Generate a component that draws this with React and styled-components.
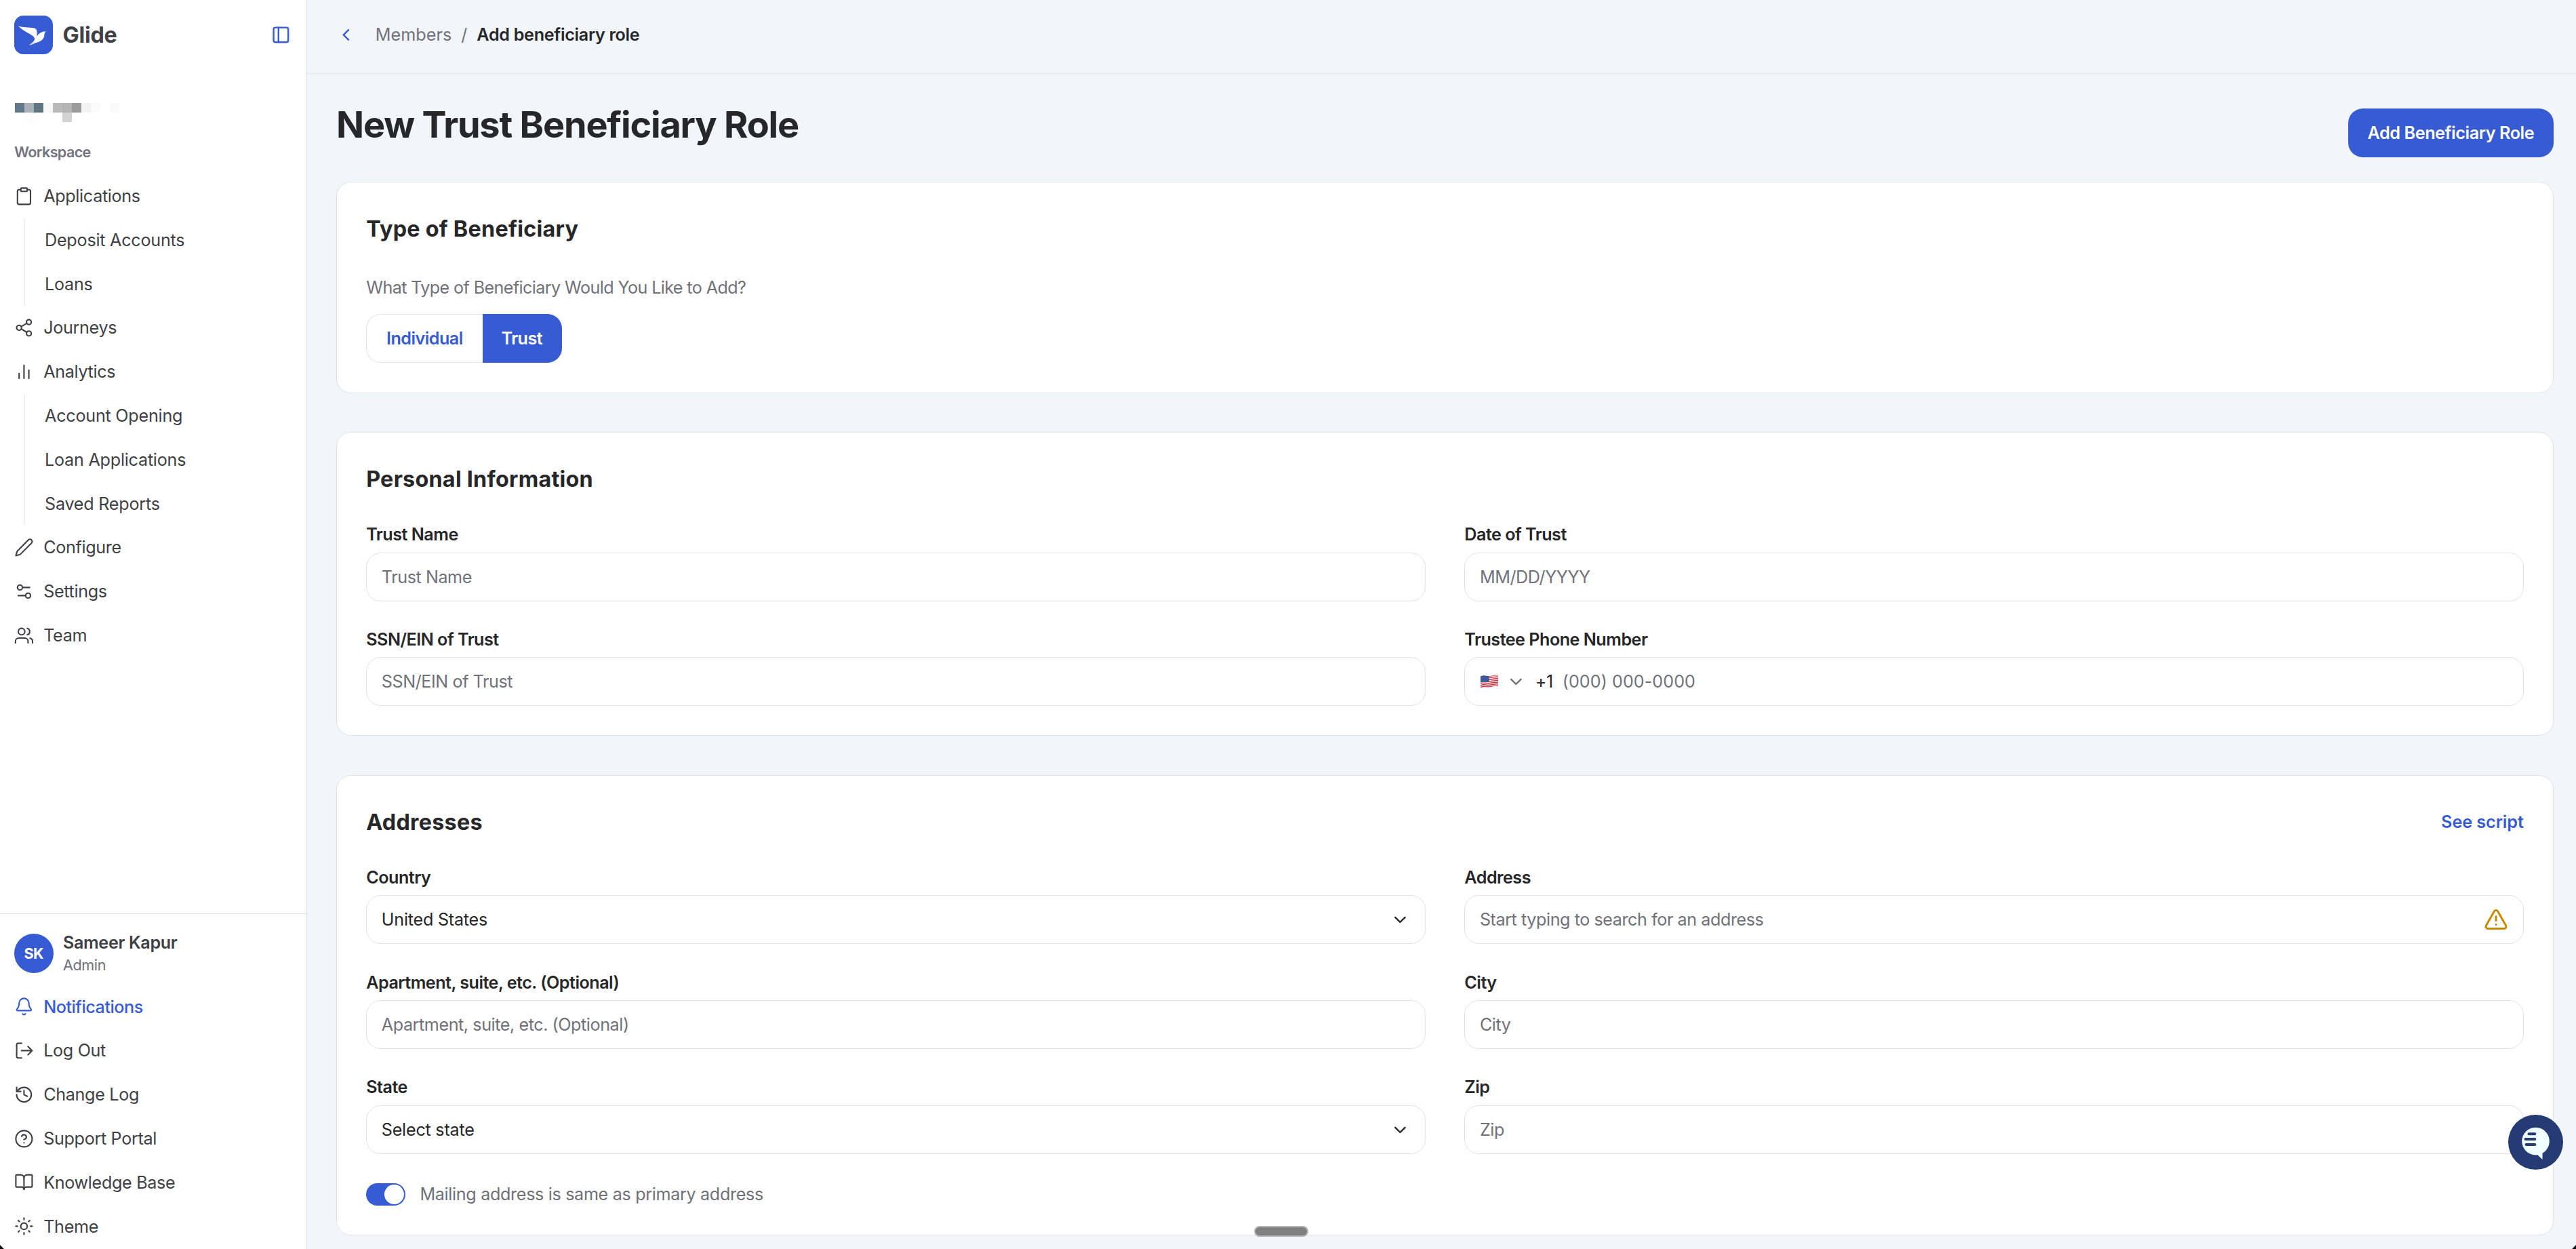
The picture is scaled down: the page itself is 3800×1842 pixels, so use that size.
import React, { useState } from 'react';
import styled, { createGlobalStyle } from 'styled-components';
import {
    PanelLeft, Clipboard, Share2, Settings2, Bell, History, CircleHelp,
    BookOpen, Sun, ChevronLeft, ChevronDown, TriangleAlert,
} from 'lucide-react';

const blue = '#375bd2';
const ink = '#27272a';
const navInk = '#3f3f46';
const muted = '#71717a';
const line = '#e1e2e5';

// 1rem = 28.8px, most sizes below are a multiple of it
const GlobalStyle = createGlobalStyle`
    html {
        font-size: 28.8px;
    }
    body {
        margin: 0;
        background: #f2f5fa;
        font-family: Inter, "Liberation Sans", sans-serif;
        font-size: 0.875rem;
        color: ${ink};
        overflow: hidden;
    }
    * {
        box-sizing: border-box;
    }
    h1, h2, p {
        margin: 0;
    }
    button, input {
        font: inherit;
        letter-spacing: inherit;
        color: inherit;
    }
`;

const Layout = styled.div`
    display: flex;
    height: 100vh;
    overflow: hidden;
`;

/* ---------- sidebar ---------- */
const Sidebar = styled.aside`
    width: 453px;
    flex-shrink: 0;
    display: flex;
    flex-direction: column;
    background: #fff;
    border-right: 1px solid ${line};
    color: ${navInk};
`;
const Brand = styled.div`
    display: flex;
    align-items: center;
    height: 103px;
    padding: 0 23px 0 21px;
    svg:last-child {
        margin-left: auto;
    }
`;
const BrandName = styled.span`
    margin-left: 0.5rem;
    font-size: 1.125rem;
    font-weight: 700;
    letter-spacing: -0.008em;
`;
const Mosaic = styled.div`
    display: grid;
    grid-template-columns: repeat(11, 14px);
    grid-auto-rows: 14px;
    margin: 49px 0 0 22px;
`;
const Pixel = styled.i`
    background: ${p => p.$c};
`;
const Caption = styled.div`
    margin: 30px 0 0 21px;
    height: 46.6px;
    font-size: 0.75rem;
    line-height: 1rem;
    font-weight: 600;
    letter-spacing: -0.03em;
    color: #73737f;
`;
const NavItem = styled.a`
    display: flex;
    align-items: center;
    gap: 0.5rem;
    height: 2.25rem;
    padding-left: 21px;
    font-weight: ${p => (p.$active ? 500 : 400)};
    letter-spacing: ${p => (p.$active ? -0.02 : -0.014)}em;
    color: ${p => (p.$active ? blue : navInk)};
`;
const SubNav = styled.div`
    margin: 3.6px 0 3.6px 35px;
    border-left: 2px solid #f1f1f3;
    padding-left: 8px;
`;
const SubItem = styled(NavItem)`
    letter-spacing: -0.01em;
    &:first-child {
        margin-top: -3.6px;
    }
    &:last-child {
        margin-bottom: -3.6px;
    }
`;
const SideFooter = styled.div`
    margin-top: auto;
    padding-bottom: 1px;
    border-top: 1px solid ${line};
`;
const Profile = styled.div`
    display: flex;
    align-items: center;
    height: 104px;
    padding: 12px 21px 0;
`;
const Avatar = styled.div`
    width: 2rem;
    height: 2rem;
    border-radius: 50%;
    background: ${blue};
    color: #fff;
    display: flex;
    align-items: center;
    justify-content: center;
    font-size: 0.75rem;
    font-weight: 700;
    letter-spacing: -0.03em;
`;
const Who = styled.div`
    margin-left: 0.5rem;
    font-weight: 600;
    line-height: 33px;
    letter-spacing: -0.015em;
    small {
        display: block;
        font-size: 0.75rem;
        font-weight: 400;
        line-height: 32px;
        color: ${muted};
    }
`;

/* ---------- main ---------- */
const Main = styled.main`
    flex: 1;
    min-width: 0;
    display: flex;
    flex-direction: column;
`;
const TopBar = styled.header`
    flex-shrink: 0;
    height: 109px;
    padding: 0 0 6px 43px;
    border-bottom: 1px solid ${line};
    display: flex;
    align-items: center;
    color: ${muted};
    svg {
        margin-right: 29px;
    }
    b {
        font-weight: 600;
        letter-spacing: -0.013em;
        color: ${ink};
    }
`;
const Slash = styled.span`
    margin: 0 14px;
`;
const Content = styled.div`
    display: flex;
    flex-direction: column;
    gap: 2rem;
    padding: 51px 33px 0 43px;
`;
const Heading = styled.div`
    display: flex;
    justify-content: space-between;
    align-items: flex-start;
    height: 108px;
    margin-bottom: -2rem;
`;
const PageTitle = styled.h1`
    font-size: 1.875rem;
    line-height: 47px;
    font-weight: 700;
    letter-spacing: -0.0225em;
`;
const PrimaryButton = styled.button`
    height: 2.5rem;
    padding: 0 1rem;
    border: 0;
    border-radius: 0.75rem;
    background: ${blue};
    color: #fff;
    font-weight: 600;
    letter-spacing: -0.017em;
`;
const Card = styled.section`
    display: flex;
    flex-direction: column;
    align-items: stretch;
    background: #fff;
    border: 1px solid ${line};
    border-radius: 0.75rem;
    padding: 1.5rem;
`;
const CardHead = styled.div`
    display: flex;
    justify-content: space-between;
    align-items: center;
    height: 1.75rem;
    margin-bottom: 1.5rem;
`;
const CardTitle = styled.h2`
    font-size: 1.125rem;
    font-weight: 700;
    letter-spacing: 0.007em;
`;
const Link = styled.a`
    color: ${blue};
    font-weight: 600;
    letter-spacing: -0.003em;
`;
const Question = styled.p`
    line-height: 1.25rem;
    margin-bottom: 0.75rem;
    color: ${muted};
    letter-spacing: -0.025em;
`;
const Segments = styled.div`
    display: flex;
`;
const Segment = styled.button`
    height: 2.5rem;
    padding: 0 1rem;
    border: 1px solid ${p => (p.$on ? blue : line)};
    background: ${p => (p.$on ? blue : '#fff')};
    color: ${p => (p.$on ? '#fff' : blue)};
    font-weight: 600;
    letter-spacing: -0.022em;
    &:first-child {
        border-right: 0;
        border-radius: 0.75rem 0 0 0.75rem;
    }
    &:last-child {
        padding: 0 28px;
        border-left: 0;
        border-radius: 0 0.75rem 0.75rem 0;
    }
`;
const Fields = styled.div`
    display: grid;
    grid-template-columns: 1fr 1fr;
    column-gap: 2rem;
    row-gap: 1.5rem;
`;
const FieldWrap = styled.div`
    display: flex;
    flex-direction: column;
    gap: 0.5rem;
`;
const Label = styled.label`
    padding-top: 1px;
    line-height: 24.2px;
    font-weight: 600;
    letter-spacing: -0.021em;
`;
const Box = styled.div`
    display: flex;
    align-items: center;
    height: 2.5rem;
    padding: 0 0.75rem;
    border: 1px solid ${line};
    border-radius: 0.75rem;
    background: #fff;
    letter-spacing: -0.018em;
    > svg:last-child {
        flex-shrink: 0;
    }
`;
const TextInput = styled.input`
    flex: 1;
    min-width: 0;
    padding: 0;
    border: 0;
    outline: 0;
    background: transparent;
    &::placeholder {
        color: ${muted};
        opacity: 1;
    }
`;
const PhoneInput = styled(TextInput)`
    letter-spacing: 0.001em;
`;
const Value = styled.span`
    flex: 1;
    letter-spacing: -0.01em;
`;
const DialCode = styled.span`
    margin: 0 14px 0 14px;
`;
const SwitchRow = styled.div`
    display: flex;
    align-items: center;
    gap: 0.75rem;
    margin-top: 1.5rem;
    height: 32.4px;
    color: ${muted};
    letter-spacing: -0.014em;
`;
const Switch = styled.button`
    width: 2rem;
    height: 32.4px;
    padding: 0 1.8px;
    border: 0;
    border-radius: 999px;
    background: ${p => (p.$on ? blue : '#d4d4d8')};
    display: flex;
    align-items: center;
    justify-content: ${p => (p.$on ? 'flex-end' : 'flex-start')};
    &::after {
        content: '';
        width: 1rem;
        height: 1rem;
        border-radius: 50%;
        background: #fff;
    }
`;

/* ---------- things floating over the page ---------- */
const ChatButton = styled.div`
    position: fixed;
    right: 19.5px;
    bottom: 117px;
    width: 81px;
    height: 81px;
    svg {
        display: block;
    }
`;
const DragPill = styled.div`
    position: fixed;
    left: 1850px;
    bottom: 18px;
    width: 80px;
    height: 16px;
    border-radius: 8px;
    border: 2px solid #b4b4b6;
    background: #808080;
`;
const Corner = styled.div`
    position: fixed;
    bottom: 0;
    ${p => p.$side}: 0;
    width: 6px;
    height: 6px;
    background: #111;
    clip-path: ${p => (p.$side === 'left'
        ? 'polygon(0 0, 100% 100%, 0 100%)'
        : 'polygon(100% 0, 100% 100%, 0 100%)')};
`;

const FlagSvg = styled.svg`
    margin: 0 12px 0 1px;
`;

const iconProps = { size: 28.8, strokeWidth: 1.75 };

const Svg = ({ children, size = 28.8, sw = 1.75 }) => (
    <svg width={size} height={size} viewBox="0 0 24 24" fill="none" stroke="currentColor"
        strokeWidth={sw} strokeLinecap="round" strokeLinejoin="round">
        {children}
    </svg>
);

const BarsIcon = () => (
    <Svg>
        <path d="M6 20v-6M12 20V4M18 20v-10" />
    </Svg>
);
const PenIcon = () => (
    <Svg>
        <path d="M21.2 6.6a2.6 2.6 0 0 0-3.8-3.8L4.2 16a3 3 0 0 0-.8 1.4L2 22l4.6-1.2a3 3 0 0 0 1.4-.9Z" />
    </Svg>
);
const TeamIcon = () => (
    <Svg>
        <path d="M17 21v-2a4 4 0 0 0-4-4H5.5a4 4 0 0 0-4 4v2" />
        <circle cx="9" cy="7" r="4" />
        <path d="M22.5 21v-2a4 4 0 0 0-3-3.87M16 3.13a4 4 0 0 1 0 7.75" />
    </Svg>
);
const LogOutIcon = () => (
    <Svg>
        <path d="M9 21H5a2 2 0 0 1-2-2V5a2 2 0 0 1 2-2h4M17 17l5-5-5-5M22 12H9" />
    </Svg>
);

const Logo = () => (
    <svg width="57" height="57" viewBox="0 0 57 57">
        <rect width="57" height="57" rx="13.5" fill={blue} />
        <path
            fill="#fff"
            d="M6 15.5 C13 17.5 22 17.5 29 18.2 C33 19 34.6 22.5 33.2 30.5 C37 26 40.5 23 47 23.2 C44.5 24.5 44.7 27 44 31 C42.5 38 34 39 28.5 41.5 C26 42.6 24 43.5 21.3 43.8 C26.5 41 30.5 37.5 30 33.5 C29 29.5 21 26.5 14.5 22.3 C11 20 8 17.5 6 15.5 Z"
        />
    </svg>
);

const Flag = () => (
    <FlagSvg width="26" height="20" viewBox="0 0 26 20">
        <defs>
            <clipPath id="wave">
                <path d="M0 2.5 C5 .2 8 2.6 13 2 C18 1.6 21 0 26 .6 V17 C21 16.2 18 18.2 13 18.6 C8 19 5 17.6 0 19.6 Z" />
            </clipPath>
        </defs>
        <g clipPath="url(#wave)">
            <rect width="26" height="20" fill="#f3eeee" />
            {[0, 1, 2, 3, 4, 5, 6].map(i => (
                <path
                    key={i}
                    transform={`translate(0 ${i * 2.65})`}
                    d="M0 2.5 C5 .2 8 2.6 13 2 C18 1.6 21 0 26 .6"
                    fill="none"
                    stroke="#cf2f3c"
                    strokeWidth="1.4"
                />
            ))}
            <path d="M0 0H12.5V11 C8 11.4 5 10 0 11.6Z" fill="#3a5a9b" />
        </g>
    </FlagSvg>
);

const ChatIcon = () => (
    <svg width="81" height="81" viewBox="0 0 81 81">
        <circle cx="40.5" cy="40.5" r="40.5" fill="#263b73" />
        <circle cx="40.5" cy="39.1" r="20.3" fill="#f0ffff" />
        <path d="M42.5 58.5 L50.5 66 V54 Z" fill="#f0ffff" />
        <path d="M30.5 28.2H39.3M25.5 35.9H39.3M26.5 43.9H39.3" stroke="#263b73" strokeWidth="4" strokeLinecap="round" />
    </svg>
);

const mosaic = [
    '#64788c', '#a9b0b8', '#5f757f', '#f8f8f8', '#b9b9b9', '#b4b4b4', '#9b9b9b', '#f3f3f3', '#fbfbfb', '#fff', '#fafafa',
    '#fff', '#fdfdfd', '#fff', '#fff', '#fff', '#d2d2d2',
];

const navigation = [
    { name: 'Applications', icon: <Clipboard {...iconProps} />, sub: ['Deposit Accounts', 'Loans'] },
    { name: 'Journeys', icon: <Share2 {...iconProps} /> },
    { name: 'Analytics', icon: <BarsIcon />, sub: ['Account Opening', 'Loan Applications', 'Saved Reports'] },
    { name: 'Configure', icon: <PenIcon /> },
    { name: 'Settings', icon: <Settings2 {...iconProps} /> },
    { name: 'Team', icon: <TeamIcon /> },
];

const footerLinks = [
    { name: 'Notifications', icon: <Bell {...iconProps} />, active: true },
    { name: 'Log Out', icon: <LogOutIcon /> },
    { name: 'Change Log', icon: <History {...iconProps} /> },
    { name: 'Support Portal', icon: <CircleHelp {...iconProps} /> },
    { name: 'Knowledge Base', icon: <BookOpen {...iconProps} /> },
    { name: 'Theme', icon: <Sun {...iconProps} /> },
];

const Field = ({ label, placeholder, children }) => (
    <FieldWrap>
        <Label>{label}</Label>
        <Box>{children || <TextInput placeholder={placeholder || label} />}</Box>
    </FieldWrap>
);

const Select = ({ label, value }) => (
    <Field label={label}>
        <Value>{value}</Value>
        <ChevronDown size={28.8} strokeWidth={2} />
    </Field>
);

const App = () => {
    const [type, setType] = useState('Trust');
    const [sameMailing, setSameMailing] = useState(true);

    return (
        <Layout>
            <GlobalStyle />
            <Sidebar>
                <Brand>
                    <Logo />
                    <BrandName>Glide</BrandName>
                    <PanelLeft size={28.8} strokeWidth={2} color={blue} />
                </Brand>
                <Mosaic>
                    {mosaic.map((c, i) => <Pixel key={i} $c={c} />)}
                </Mosaic>
                <Caption>Workspace</Caption>
                {navigation.map(item => (
                    <div key={item.name}>
                        <NavItem>{item.icon}{item.name}</NavItem>
                        {item.sub && (
                            <SubNav>
                                {item.sub.map(s => <SubItem key={s}>{s}</SubItem>)}
                            </SubNav>
                        )}
                    </div>
                ))}
                <SideFooter>
                    <Profile>
                        <Avatar>SK</Avatar>
                        <Who>Sameer Kapur<small>Admin</small></Who>
                    </Profile>
                    {footerLinks.map(item => (
                        <NavItem key={item.name} $active={item.active}>{item.icon}{item.name}</NavItem>
                    ))}
                </SideFooter>
            </Sidebar>
            <Main>
                <TopBar>
                    <ChevronLeft size={28.8} strokeWidth={2} color={blue} />
                    <span>Members</span>
                    <Slash>/</Slash>
                    <b>Add beneficiary role</b>
                </TopBar>
                <Content>
                    <Heading>
                        <PageTitle>New Trust Beneficiary Role</PageTitle>
                        <PrimaryButton>Add Beneficiary Role</PrimaryButton>
                    </Heading>
                    <Card>
                        <CardHead><CardTitle>Type of Beneficiary</CardTitle></CardHead>
                        <Question>What Type of Beneficiary Would You Like to Add?</Question>
                        <Segments>
                            {['Individual', 'Trust'].map(t => (
                                <Segment key={t} $on={t === type} onClick={() => setType(t)}>{t}</Segment>
                            ))}
                        </Segments>
                    </Card>
                    <Card>
                        <CardHead><CardTitle>Personal Information</CardTitle></CardHead>
                        <Fields>
                            <Field label="Trust Name" />
                            <Field label="Date of Trust" placeholder="MM/DD/YYYY" />
                            <Field label="SSN/EIN of Trust" />
                            <Field label="Trustee Phone Number">
                                <Flag />
                                <ChevronDown size={28.8} strokeWidth={2} color={muted} />
                                <DialCode>+1</DialCode>
                                <PhoneInput placeholder="(000) 000-0000" />
                            </Field>
                        </Fields>
                    </Card>
                    <Card>
                        <CardHead>
                            <CardTitle>Addresses</CardTitle>
                            <Link>See script</Link>
                        </CardHead>
                        <Fields>
                            <Select label="Country" value="United States" />
                            <Field label="Address">
                                <TextInput placeholder="Start typing to search for an address" />
                                <TriangleAlert size={36} strokeWidth={2} color="#c48b00" />
                            </Field>
                            <Field label="Apartment, suite, etc. (Optional)" />
                            <Field label="City" />
                            <Select label="State" value="Select state" />
                            <Field label="Zip" />
                        </Fields>
                        <SwitchRow>
                            <Switch $on={sameMailing} onClick={() => setSameMailing(!sameMailing)} />
                            Mailing address is same as primary address
                        </SwitchRow>
                    </Card>
                </Content>
            </Main>
            <ChatButton><ChatIcon /></ChatButton>
            <DragPill />
            <Corner $side="left" />
            <Corner $side="right" />
        </Layout>
    );
};

export default App;
